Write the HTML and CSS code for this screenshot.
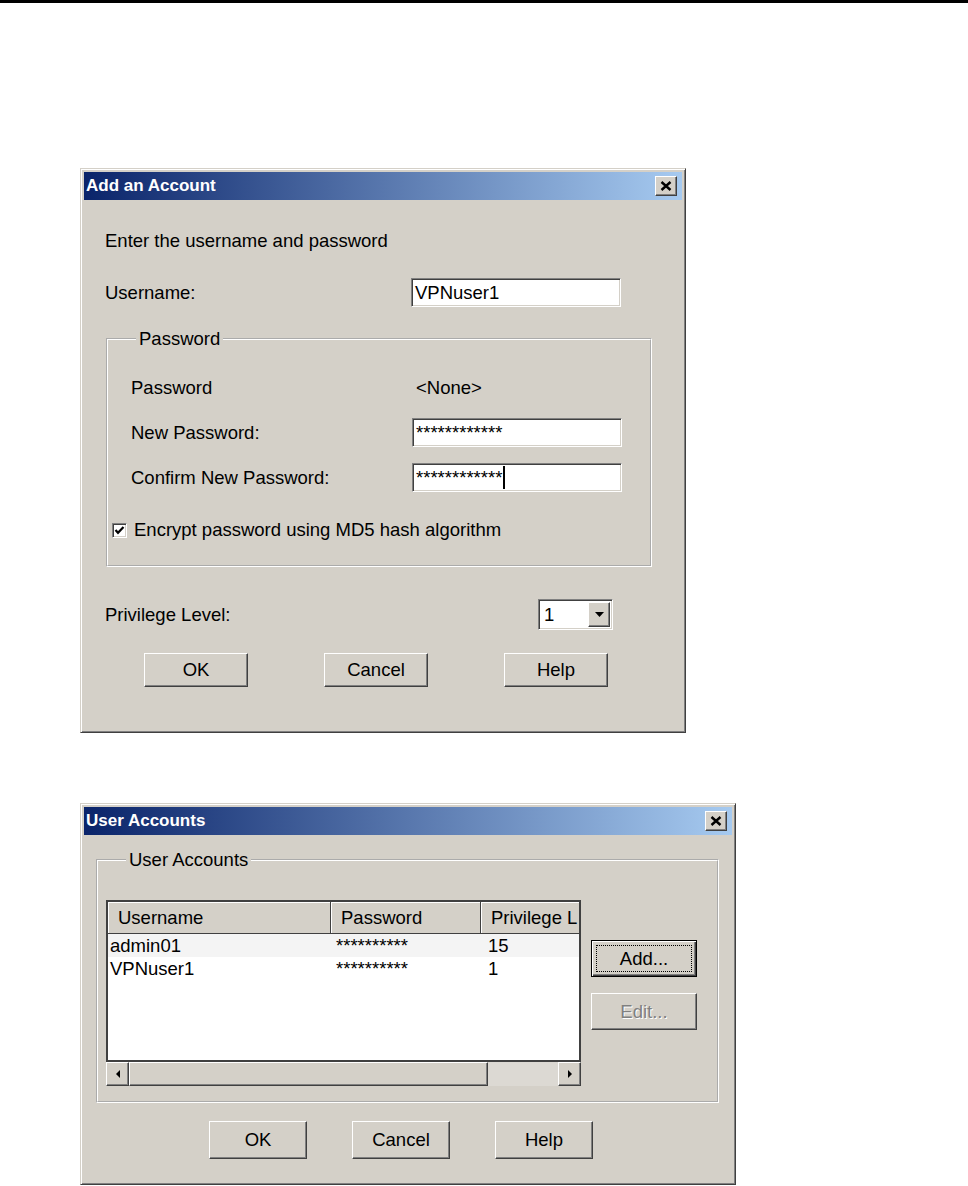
FILE: index.html
```html
<!DOCTYPE html>
<html lang="en">
<head>
  <meta charset="UTF-8" />
  <title>Add an Account / User Accounts</title>
  <link rel="stylesheet" href="styles.css">
</head>
<body>
  <div class="top-rule"></div>

  <!-- Add an Account dialog -->
  <div class="dialog add-dialog">
    <div class="titlebar">
      <span class="title">Add an Account</span>
      <button type="button" class="close-btn">
        <svg width="12" height="10" viewBox="0 0 12 10"><path d="M1.5 1 L10.5 9 M10.5 1 L1.5 9" stroke="#000" stroke-width="2.4" fill="none"/></svg>
      </button>
    </div>
    <div class="add-body">
      <p class="intro">Enter the username and password</p>

      <div class="row user-row">
        <span class="label">Username:</span>
        <div class="field">VPNuser1</div>
      </div>

      <fieldset class="group pass-group">
        <legend>Password</legend>
        <div class="row pw-row first">
          <span class="label">Password</span>
          <span class="value">&lt;None&gt;</span>
        </div>
        <div class="row pw-row">
          <span class="label">New Password:</span>
          <div class="field stars">************</div>
        </div>
        <div class="row pw-row">
          <span class="label">Confirm New Password:</span>
          <div class="field stars">************<span class="caret"></span></div>
        </div>
        <div class="check-row">
          <span class="checkbox">
            <svg width="11" height="11" viewBox="0 0 11 11"><polyline points="1.5,5 4,7.8 9.5,2" stroke="#000" stroke-width="2.2" fill="none"/></svg>
          </span>
          Encrypt password using MD5 hash algorithm
        </div>
      </fieldset>

      <div class="row priv-row">
        <span class="label">Privilege Level:</span>
        <div class="combo">
          <span class="combo-value">1</span>
          <span class="combo-btn">
            <svg width="9" height="5" viewBox="0 0 9 5"><polygon points="0,0 9,0 4.5,5" fill="#000"/></svg>
          </span>
        </div>
      </div>

      <div class="buttons add-buttons">
        <button type="button" class="btn">OK</button>
        <button type="button" class="btn">Cancel</button>
        <button type="button" class="btn">Help</button>
      </div>
    </div>
  </div>

  <!-- User Accounts dialog -->
  <div class="dialog users-dialog">
    <div class="titlebar">
      <span class="title">User Accounts</span>
      <button type="button" class="close-btn">
        <svg width="12" height="10" viewBox="0 0 12 10"><path d="M1.5 1 L10.5 9 M10.5 1 L1.5 9" stroke="#000" stroke-width="2.4" fill="none"/></svg>
      </button>
    </div>
    <div class="users-body">
      <fieldset class="group accounts-group">
        <legend>User Accounts</legend>
        <div class="accounts">
          <div class="listview">
            <div class="list-box">
              <div class="list-head">
                <span class="cell c1">Username</span>
                <span class="cell c2">Password</span>
                <span class="cell c3">Privilege L</span>
              </div>
              <div class="list-row alt">
                <span class="cell c1">admin01</span>
                <span class="cell c2">**********</span>
                <span class="cell c3">15</span>
              </div>
              <div class="list-row">
                <span class="cell c1">VPNuser1</span>
                <span class="cell c2">**********</span>
                <span class="cell c3">1</span>
              </div>
            </div>
            <div class="hscroll">
              <span class="sb-btn">
                <svg width="4" height="8" viewBox="0 0 4 8"><polygon points="4,0 4,8 0,4" fill="#000"/></svg>
              </span>
              <span class="sb-thumb"></span>
              <span class="sb-track"></span>
              <span class="sb-btn">
                <svg width="4" height="8" viewBox="0 0 4 8"><polygon points="0,0 0,8 4,4" fill="#000"/></svg>
              </span>
            </div>
          </div>
          <div class="side-buttons">
            <button type="button" class="btn default">Add...</button>
            <button type="button" class="btn disabled">Edit...</button>
          </div>
        </div>
      </fieldset>

      <div class="buttons users-buttons">
        <button type="button" class="btn">OK</button>
        <button type="button" class="btn">Cancel</button>
        <button type="button" class="btn">Help</button>
      </div>
    </div>
  </div>
</body>
</html>
```

FILE: styles.css
```css
* {
  box-sizing: border-box;
}

body {
  margin: 0;
  background: #fff;
  font-family: "Liberation Sans", Arial, sans-serif;
  font-size: 18.5px;
  color: #000;
}

.top-rule {
  height: 3px;
  background: #000;
}

/* window frame */
.dialog {
  margin-left: 80px;
  padding: 3px;
  background: #d4d0c8;
  border: 1px solid;
  border-color: #d4d0c8 #404040 #404040 #d4d0c8;
  box-shadow: inset 1px 1px #fff, inset -1px -1px #808080;
}

.add-dialog {
  margin-top: 165px;
  width: 606px;
  height: 565px;
}

.users-dialog {
  margin-top: 70px;
  width: 656px;
  height: 382px;
}

.titlebar {
  height: 28px;
  display: flex;
  align-items: center;
  justify-content: space-between;
  padding: 0 5px 0 2px;
  background: linear-gradient(to right, #0a246a, #a6caf0);
  color: #fff;
  font-size: 17px;
  font-weight: bold;
}

.close-btn {
  width: 22px;
  height: 20px;
  padding: 0;
  display: flex;
  align-items: center;
  justify-content: center;
  background: #d4d0c8;
  border: 1px solid;
  border-color: #fff #404040 #404040 #fff;
  box-shadow: inset -1px -1px #808080;
}

.row {
  display: flex;
  align-items: center;
}

.field {
  width: 210px;
  height: 29px;
  display: flex;
  align-items: center;
  padding: 0 3px;
  background: #fff;
  border: 1px solid;
  border-color: #808080 #fff #fff #808080;
  box-shadow: inset 1px 1px #404040, inset -1px -1px #d4d0c8;
}

.caret {
  display: inline-block;
  width: 2px;
  height: 23px;
  margin-left: 1px;
  background: #000;
}

/* group boxes */
.group {
  margin: 0;
  border: 2px groove #fff;
  min-width: 0;
}

.group legend {
  padding: 0 3px;
  line-height: 22px;
}

/* Add an Account */
.add-body {
  padding: 30px 0 0 21px;
}

.intro {
  margin: 0;
  line-height: 22px;
}

.user-row {
  margin-top: 26px;
  height: 29px;
}

.user-row .label {
  width: 306px;
}

.pass-group {
  margin: 21px 0 0 1px;
  width: 546px;
  padding: 0 0 24px 4px;
}

.pass-group legend {
  margin-left: 24px;
}

.pw-row {
  height: 29px;
  margin-top: 16px;
  padding-left: 19px;
}

.pw-row.first {
  margin-top: 23px;
}

.pw-row .label {
  width: 281px;
}

.pw-row .value {
  padding-left: 4px;
}

.check-row {
  display: flex;
  align-items: center;
  gap: 7px;
  height: 22px;
  margin-top: 27px;
}

.checkbox {
  width: 15px;
  height: 15px;
  display: flex;
  align-items: center;
  justify-content: center;
  background: #fff;
  border: 1px solid;
  border-color: #808080 #fff #fff #808080;
  box-shadow: inset 1px 1px #404040, inset -1px -1px #d4d0c8;
}

.priv-row {
  margin-top: 32px;
  height: 31px;
}

.priv-row .label {
  width: 433px;
}

.combo {
  width: 75px;
  height: 31px;
  display: flex;
  align-items: stretch;
  padding: 2px 2px 2px 5px;
  background: #fff;
  border: 1px solid;
  border-color: #808080 #fff #fff #808080;
  box-shadow: inset 1px 1px #404040, inset -1px -1px #d4d0c8;
}

.combo-value {
  flex: 1;
  display: flex;
  align-items: center;
}

.combo-btn {
  width: 22px;
  display: flex;
  align-items: center;
  justify-content: center;
  background: #d4d0c8;
  border: 1px solid;
  border-color: #fff #404040 #404040 #fff;
  box-shadow: inset -1px -1px #808080;
}

/* push buttons */
.buttons {
  display: flex;
}

.btn {
  padding: 0;
  font: inherit;
  color: #000;
  background: #d4d0c8;
  border: 1px solid;
  border-color: #fff #404040 #404040 #fff;
  box-shadow: inset -1px -1px #808080;
}

.add-buttons {
  margin-top: 23px;
  padding-left: 39px;
  gap: 76px;
}

.add-buttons .btn {
  width: 104px;
  height: 34px;
}

/* User Accounts */
.users-body {
  padding: 14px 0 0 12px;
}

.accounts-group {
  width: 623px;
  padding: 0 0 15px 8px;
}

.accounts-group legend {
  margin-left: 20px;
}

.accounts {
  display: flex;
  gap: 10px;
  margin-top: 29px;
}

.listview {
  width: 475px;
}

.list-box {
  height: 162px;
  background: #fff;
  border: 2px solid #404040;
  overflow: hidden;
}

.list-head,
.list-row {
  display: flex;
  white-space: nowrap;
}

.list-head {
  height: 32px;
  background: #d4d0c8;
  border-bottom: 1px solid #404040;
}

.list-head .cell {
  display: flex;
  align-items: center;
  padding-left: 10px;
  border-right: 1px solid #404040;
  box-shadow: inset 1px 1px #fff;
}

.list-head .c3 {
  border-right: none;
}

.list-row {
  height: 23px;
  align-items: center;
}

.list-row.alt {
  background: #f4f4f4;
}

.cell {
  overflow: hidden;
}

.c1 {
  width: 223px;
}

.c2 {
  width: 150px;
}

.c3 {
  flex: 1;
}

.list-row .c1 {
  padding-left: 2px;
}

.list-row .c2 {
  padding-left: 5px;
}

.list-row .c3 {
  padding-left: 7px;
}

.hscroll {
  display: flex;
  height: 24px;
}

.sb-btn,
.sb-thumb {
  background: #d4d0c8;
  border: 1px solid;
  border-color: #fff #404040 #404040 #fff;
  box-shadow: inset -1px -1px #808080;
}

.sb-btn {
  width: 23px;
  display: flex;
  align-items: center;
  justify-content: center;
}

.sb-thumb {
  width: 359px;
}

.sb-track {
  flex: 1;
  background: #dcd9d3;
}

.side-buttons {
  display: flex;
  flex-direction: column;
  padding-top: 40px;
  gap: 16px;
}

.side-buttons .btn {
  width: 106px;
  height: 37px;
}

.btn.default {
  position: relative;
  border-color: #000;
  box-shadow: inset 1px 1px #fff, inset -1px -1px #404040, inset -2px -2px #808080;
}

.btn.default::after {
  content: "";
  position: absolute;
  inset: 4px;
  border: 1px dotted #000;
}

.btn.disabled {
  color: #808080;
  text-shadow: 1px 1px #fff;
}

.users-buttons {
  margin-top: 18px;
  padding-left: 113px;
  gap: 45px;
}

.users-buttons .btn {
  width: 98px;
  height: 38px;
}
```
